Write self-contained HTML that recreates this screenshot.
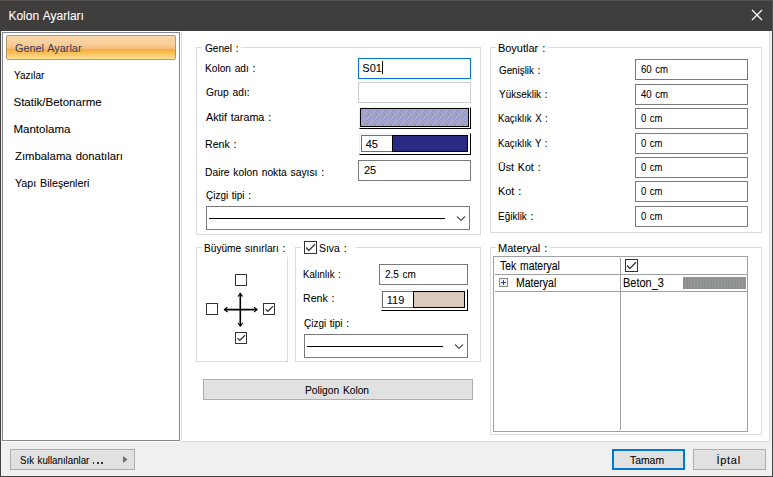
<!DOCTYPE html>
<html><head><meta charset="utf-8"><style>
html,body{margin:0;padding:0;}
body{width:773px;height:477px;position:relative;overflow:hidden;background:#f0f0f0;font-family:"Liberation Sans",sans-serif;}
.a{position:absolute;box-sizing:border-box;}
.t{position:absolute;white-space:pre;transform-origin:0 0;font-family:"Liberation Sans",sans-serif;word-spacing:1px;-webkit-text-stroke:0.07px currentColor;}

</style></head><body>
<!-- window frame -->
<div class="a" style="left:0;top:0;width:773px;height:477px;border:1px solid #454341;border-top-color:#555350;"></div>
<!-- title bar -->
<div class="a" style="left:0;top:0;width:773px;height:31px;background:#403e3c;border-top:1px solid #555350;border-right:1px solid #555;"></div>
<svg class="a" style="left:751px;top:9px" width="12" height="12" viewBox="0 0 12 12"><path d="M1 1 L11 11 M11 1 L1 11" stroke="#fff" stroke-width="1.3"/></svg>
<!-- left list panel -->
<div class="a" style="left:1px;top:31px;width:180px;height:411px;background:#fff;"></div>
<div class="a" style="left:2px;top:32px;width:178px;height:409px;border:1px solid #838893;"></div>
<div class="a" style="left:1px;top:31px;width:1px;height:411px;background:#ececec;"></div>
<!-- selected item -->
<div class="a" style="left:6px;top:35px;width:170px;height:25px;border:1px solid #b39a6e;border-radius:2px;background:linear-gradient(to bottom,#f9d8ac 0%,#f8cd98 35%,#f7bf80 54%,#f5ad40 56%,#f8c05a 75%,#fde194 100%);"></div>
<!-- content area -->
<div class="a" style="left:181px;top:31px;width:589px;height:411px;background:#fff;border:1px solid #dcdcdc;border-top:none;"></div>
<!-- group boxes -->
<div class="a" style="left:196px;top:47px;width:285px;height:188px;border:1px solid #dcdcdc;"></div>
<div class="a" style="left:490px;top:47px;width:272px;height:186px;border:1px solid #dcdcdc;"></div>
<div class="a" style="left:196px;top:247px;width:92px;height:115px;border:1px solid #dcdcdc;"></div>
<div class="a" style="left:295px;top:247px;width:186px;height:115px;border:1px solid #dcdcdc;"></div>
<div class="a" style="left:490px;top:247px;width:272px;height:188px;border:1px solid #dcdcdc;"></div>
<!-- label gaps on group borders -->
<div class="a" style="left:202px;top:45px;width:39px;height:4px;background:#fff;"></div>
<div class="a" style="left:496px;top:45px;width:52px;height:4px;background:#fff;"></div>
<div class="a" style="left:202px;top:245px;width:90px;height:4px;background:#fff;"></div>
<div class="a" style="left:286px;top:249px;width:4px;height:8px;background:#fff;"></div>
<div class="a" style="left:301px;top:245px;width:55px;height:4px;background:#fff;"></div>
<div class="a" style="left:496px;top:245px;width:54px;height:4px;background:#fff;"></div>
<!-- Genel inputs -->
<div class="a" style="left:358px;top:58px;width:113px;height:21px;border:1px solid #0078d7;background:#fff;"></div>
<div class="a" style="left:382px;top:61px;width:1px;height:13px;background:#000;"></div>
<div class="a" style="left:358px;top:82px;width:113px;height:21px;border:1px solid #cccccc;background:#fff;"></div>
<!-- hatch -->
<div class="a" style="left:359px;top:107px;width:112px;height:22px;border-top:1px solid #f0f0f0;border-left:1px solid #f0f0f0;border-right:1px solid #000;border-bottom:1px solid #000;"></div>
<svg class="a" style="left:360px;top:108px" width="109" height="19" shape-rendering="crispEdges">
<defs><pattern id="h" x="1" y="1" width="8" height="8" patternUnits="userSpaceOnUse"><rect width="8" height="8" fill="#9d9dca"/><rect x="7" y="0" width="1" height="1" fill="#bcbab4"/><rect x="6" y="1" width="1" height="1" fill="#bcbab4"/><rect x="5" y="2" width="1" height="1" fill="#bcbab4"/><rect x="4" y="3" width="1" height="1" fill="#bcbab4"/><rect x="3" y="4" width="1" height="1" fill="#bcbab4"/><rect x="2" y="5" width="1" height="1" fill="#bcbab4"/><rect x="1" y="6" width="1" height="1" fill="#bcbab4"/><rect x="0" y="7" width="1" height="1" fill="#bcbab4"/><rect x="2" y="2" width="1" height="1" fill="#bcbab4"/><rect x="5" y="5" width="1" height="1" fill="#bcbab4"/><rect x="0" y="3" width="1" height="1" fill="#bcbab4"/><rect x="3" y="0" width="1" height="1" fill="#bcbab4"/><rect x="5" y="2" width="1" height="1" fill="#bcbab4"/><rect x="2" y="5" width="1" height="1" fill="#bcbab4"/></pattern></defs>
<rect x="0" y="0" width="109" height="19" fill="url(#h)"/><rect x="0.5" y="0.5" width="108" height="18" fill="none" stroke="#000" stroke-width="1"/></svg>
<!-- renk -->
<div class="a" style="left:359px;top:133px;width:112px;height:22px;border-top:1px solid #f0f0f0;border-left:1px solid #f0f0f0;border-right:1px solid #000;border-bottom:1px solid #000;"></div>
<div class="a" style="left:361px;top:135px;width:31px;height:17px;border:1px solid #6e6e6e;border-right:none;background:#fff;"></div>
<div class="a" style="left:392px;top:135px;width:76px;height:17px;border:1px solid #000;background:#2b2a82;"></div>
<!-- daire -->
<div class="a" style="left:358px;top:160px;width:113px;height:21px;border:1px solid #7a7a7a;background:#fff;"></div>
<!-- cizgi tipi dropdown -->
<div class="a" style="left:206px;top:206px;width:264px;height:24px;border:1px solid #7a7a7a;background:#fff;"></div>
<div class="a" style="left:209px;top:218px;width:236px;height:1px;background:#000;"></div>
<svg class="a" style="left:456px;top:215px" width="10" height="7"><path d="M1 1.5 L5 5.5 L9 1.5" fill="none" stroke="#505050" stroke-width="1.1"/></svg>
<!-- buyume checkboxes & arrows -->
<div class="a" style="left:235px;top:274px;width:12px;height:12px;border:1px solid #333;background:#fff;"></div>
<div class="a" style="left:206px;top:303px;width:12px;height:12px;border:1px solid #333;background:#fff;"></div>
<div class="a" style="left:263px;top:303px;width:12px;height:12px;border:1px solid #333;background:#fff;"></div>
<div class="a" style="left:235px;top:332px;width:12px;height:12px;border:1px solid #333;background:#fff;"></div>
<svg class="a" style="left:263px;top:303px" width="12" height="12"><path d="M2.5 6.2 L4.8 8.3 L10 3.2" fill="none" stroke="#3a3a3a" stroke-width="1.2"/></svg>
<svg class="a" style="left:235px;top:332px" width="12" height="12"><path d="M2.5 6.2 L4.8 8.3 L10 3.2" fill="none" stroke="#3a3a3a" stroke-width="1.2"/></svg>
<svg class="a" style="left:222px;top:291px" width="38" height="38"><path d="M18.3 2.5 L18.3 35 M2.5 18.6 L35 18.6" fill="none" stroke="#000" stroke-width="1.6"/><path d="M16 5.5 L18.3 2.5 L20.6 5.5 M16 32 L18.3 35 L20.6 32 M5.5 16.3 L2.5 18.6 L5.5 20.9 M32 16.3 L35 18.6 L32 20.9" fill="none" stroke="#000" stroke-width="1.2"/></svg>
<!-- siva checkbox -->
<div class="a" style="left:304px;top:241px;width:13px;height:13px;border:1px solid #333;background:#fff;"></div>
<svg class="a" style="left:304px;top:241px" width="13" height="13"><path d="M2.2 6.5 L4.8 9.5 L11 3.2" fill="none" stroke="#3a3a3a" stroke-width="1.3"/></svg>
<!-- siva inputs -->
<div class="a" style="left:379px;top:264px;width:89px;height:21px;border:1px solid #7a7a7a;background:#fff;"></div>
<div class="a" style="left:381px;top:289px;width:87px;height:22px;border-top:1px solid #f0f0f0;border-left:1px solid #f0f0f0;border-right:1px solid #000;border-bottom:1px solid #000;"></div>
<div class="a" style="left:382px;top:291px;width:32px;height:17px;border:1px solid #6e6e6e;border-right:none;background:#fff;"></div>
<div class="a" style="left:413px;top:291px;width:52px;height:17px;border:1px solid #000;background:#dccbbd;"></div>
<div class="a" style="left:304px;top:334px;width:164px;height:24px;border:1px solid #7a7a7a;background:#fff;"></div>
<div class="a" style="left:307px;top:346px;width:136px;height:1px;background:#000;"></div>
<svg class="a" style="left:454px;top:343px" width="10" height="7"><path d="M1 1.5 L5 5.5 L9 1.5" fill="none" stroke="#505050" stroke-width="1.1"/></svg>
<!-- poligon kolon button -->
<div class="a" style="left:203px;top:379px;width:270px;height:21px;border:1px solid #adadad;background:#e1e1e1;"></div>
<!-- boyutlar inputs -->
<div class="a" style="left:635px;top:59px;width:113px;height:21px;border:1px solid #7a7a7a;background:#fff;"></div>
<div class="a" style="left:635px;top:84px;width:113px;height:21px;border:1px solid #7a7a7a;background:#fff;"></div>
<div class="a" style="left:635px;top:108px;width:113px;height:21px;border:1px solid #7a7a7a;background:#fff;"></div>
<div class="a" style="left:635px;top:133px;width:113px;height:21px;border:1px solid #7a7a7a;background:#fff;"></div>
<div class="a" style="left:635px;top:157px;width:113px;height:21px;border:1px solid #7a7a7a;background:#fff;"></div>
<div class="a" style="left:635px;top:181px;width:113px;height:21px;border:1px solid #7a7a7a;background:#fff;"></div>
<div class="a" style="left:635px;top:206px;width:113px;height:21px;border:1px solid #7a7a7a;background:#fff;"></div>
<!-- materyal grid -->
<div class="a" style="left:493px;top:256px;width:255px;height:176px;border:1px solid #a0a0a8;background:#fff;"></div>
<div class="a" style="left:495px;top:274px;width:252px;height:1px;background:#a0a0a0;"></div>
<div class="a" style="left:495px;top:291px;width:252px;height:1px;background:#a0a0a0;"></div>
<div class="a" style="left:620px;top:258px;width:1px;height:172px;background:#a0a0a0;"></div>
<div class="a" style="left:625px;top:259px;width:13px;height:13px;border:1px solid #333;background:#fff;"></div>
<svg class="a" style="left:625px;top:259px" width="13" height="13"><path d="M2.2 6.5 L4.8 9.5 L11 3.2" fill="none" stroke="#3a3a3a" stroke-width="1.3"/></svg>
<div class="a" style="left:499px;top:278px;width:9px;height:9px;border:1px solid #8a8a8a;background:#f4f4f4;"></div>
<svg class="a" style="left:499px;top:278px" width="9" height="9"><path d="M2 4.5 L7 4.5 M4.5 2 L4.5 7" stroke="#2040a0" stroke-width="1"/></svg>
<div class="a" style="left:683px;top:277px;width:63px;height:12px;background:repeating-linear-gradient(to right,#8e908f 0,#8e908f 2px,#979998 2px,#979998 3px);"></div>
<!-- bottom buttons -->
<div class="a" style="left:10px;top:449px;width:125px;height:21px;border:1px solid #adadad;background:#e1e1e1;"></div>
<svg class="a" style="left:122px;top:455px" width="7" height="10"><path d="M1 1 L5.5 4.5 L1 8 Z" fill="#707070"/></svg>
<div class="a" style="left:612px;top:449px;width:73px;height:21px;border:2px solid #0078d7;background:#e1e1e1;"></div>
<div class="a" style="left:693px;top:449px;width:73px;height:21px;border:1px solid #adadad;background:#e1e1e1;"></div>
<div class="a" style="left:92.7px;top:462px;width:1.7px;height:1.7px;background:#333;"></div>
<div class="a" style="left:97.1px;top:462px;width:1.7px;height:1.7px;background:#333;"></div>
<div class="a" style="left:101.4px;top:462px;width:1.7px;height:1.7px;background:#333;"></div>

<div class="t" style="left:8.4px;top:10.0px;font-size:12px;line-height:12px;color:#fff;">Kolon Ayarları</div>
<div class="t" style="left:15.0px;top:43.0px;font-size:11.5px;line-height:11.5px;color:#3e3f58;transform:scaleX(0.944);">Genel Ayarlar</div>
<div class="t" style="left:14.2px;top:70.0px;font-size:11.5px;line-height:11.5px;color:#000;transform:scaleX(0.871);">Yazılar</div>
<div class="t" style="left:13.5px;top:97.0px;font-size:11.5px;line-height:11.5px;color:#000;">Statik/Betonarme</div>
<div class="t" style="left:13.5px;top:124.0px;font-size:11.5px;line-height:11.5px;color:#000;">Mantolama</div>
<div class="t" style="left:14.5px;top:151.0px;font-size:11.5px;line-height:11.5px;color:#000;transform:scaleX(0.984);">Zımbalama donatıları</div>
<div class="t" style="left:14.5px;top:178.0px;font-size:11.5px;line-height:11.5px;color:#000;transform:scaleX(0.929);">Yapı Bileşenleri</div>
<div class="t" style="left:204.7px;top:43.0px;font-size:11px;line-height:11px;color:#000;transform:scaleX(0.919);">Genel :</div>
<div class="t" style="left:204.9px;top:63.0px;font-size:11px;line-height:11px;color:#000;transform:scaleX(0.923);">Kolon adı :</div>
<div class="t" style="left:206.1px;top:87.0px;font-size:11px;line-height:11px;color:#000;transform:scaleX(0.930);">Grup adı:</div>
<div class="t" style="left:206.1px;top:112.0px;font-size:11px;line-height:11px;color:#000;transform:scaleX(0.977);">Aktif tarama :</div>
<div class="t" style="left:204.9px;top:139.0px;font-size:11px;line-height:11px;color:#000;transform:scaleX(0.961);">Renk :</div>
<div class="t" style="left:205.0px;top:167.0px;font-size:11px;line-height:11px;color:#000;transform:scaleX(0.934);">Daire kolon nokta sayısı :</div>
<div class="t" style="left:206.1px;top:190.0px;font-size:11px;line-height:11px;color:#000;transform:scaleX(0.906);">Çizgi tipi :</div>
<div class="t" style="left:362.3px;top:63.0px;font-size:11px;line-height:11px;color:#000;">S01</div>
<div class="t" style="left:365.7px;top:139.0px;font-size:11px;line-height:11px;color:#000;">45</div>
<div class="t" style="left:363.9px;top:165.0px;font-size:11px;line-height:11px;color:#000;">25</div>
<div class="t" style="left:203.9px;top:243.0px;font-size:11px;line-height:11px;color:#000;transform:scaleX(0.922);">Büyüme sınırları :</div>
<div class="t" style="left:319.1px;top:243.0px;font-size:11px;line-height:11px;color:#000;transform:scaleX(0.948);">Sıva :</div>
<div class="t" style="left:303.0px;top:269.0px;font-size:11px;line-height:11px;color:#000;transform:scaleX(0.874);">Kalınlık :</div>
<div class="t" style="left:302.6px;top:293.0px;font-size:11px;line-height:11px;color:#000;transform:scaleX(0.961);">Renk :</div>
<div class="t" style="left:303.9px;top:318.0px;font-size:11px;line-height:11px;color:#000;transform:scaleX(0.906);">Çizgi tipi :</div>
<div class="t" style="left:385.0px;top:269.0px;font-size:11px;line-height:11px;color:#000;transform:scaleX(0.906);">2.5 cm</div>
<div class="t" style="left:386.8px;top:295.0px;font-size:11px;line-height:11px;color:#000;">119</div>
<div class="t" style="left:304.8px;top:385.0px;font-size:11px;line-height:11px;color:#000;transform:scaleX(0.930);">Poligon Kolon</div>
<div class="t" style="left:497.9px;top:43.0px;font-size:11px;line-height:11px;color:#000;">Boyutlar :</div>
<div class="t" style="left:498.9px;top:65.0px;font-size:11px;line-height:11px;color:#000;transform:scaleX(0.893);">Genişlik :</div>
<div class="t" style="left:498.9px;top:89.0px;font-size:11px;line-height:11px;color:#000;transform:scaleX(0.906);">Yükseklik :</div>
<div class="t" style="left:498.0px;top:113.0px;font-size:11px;line-height:11px;color:#000;transform:scaleX(0.873);">Kaçıklık X :</div>
<div class="t" style="left:498.0px;top:138.0px;font-size:11px;line-height:11px;color:#000;transform:scaleX(0.873);">Kaçıklık Y :</div>
<div class="t" style="left:497.9px;top:162.0px;font-size:11px;line-height:11px;color:#000;transform:scaleX(0.964);">Üst Kot :</div>
<div class="t" style="left:497.9px;top:186.0px;font-size:11px;line-height:11px;color:#000;transform:scaleX(0.986);">Kot :</div>
<div class="t" style="left:498.0px;top:211.0px;font-size:11px;line-height:11px;color:#000;transform:scaleX(0.908);">Eğiklik :</div>
<div class="t" style="left:640.7px;top:64.0px;font-size:11px;line-height:11px;color:#000;transform:scaleX(0.871);">60 cm</div>
<div class="t" style="left:640.7px;top:89.0px;font-size:11px;line-height:11px;color:#000;transform:scaleX(0.871);">40 cm</div>
<div class="t" style="left:640.7px;top:113.0px;font-size:11px;line-height:11px;color:#000;transform:scaleX(0.864);">0 cm</div>
<div class="t" style="left:640.7px;top:138.0px;font-size:11px;line-height:11px;color:#000;transform:scaleX(0.864);">0 cm</div>
<div class="t" style="left:640.7px;top:162.0px;font-size:11px;line-height:11px;color:#000;transform:scaleX(0.864);">0 cm</div>
<div class="t" style="left:640.7px;top:186.0px;font-size:11px;line-height:11px;color:#000;transform:scaleX(0.864);">0 cm</div>
<div class="t" style="left:640.7px;top:211.0px;font-size:11px;line-height:11px;color:#000;transform:scaleX(0.864);">0 cm</div>
<div class="t" style="left:498.1px;top:243.0px;font-size:11px;line-height:11px;color:#000;">Materyal :</div>
<div class="t" style="left:500.0px;top:260.0px;font-size:12px;line-height:12px;color:#000;transform:scaleX(0.868);">Tek materyal</div>
<div class="t" style="left:515.6px;top:277.0px;font-size:12px;line-height:12px;color:#000;transform:scaleX(0.875);">Materyal</div>
<div class="t" style="left:622.9px;top:277.0px;font-size:12px;line-height:12px;color:#000;transform:scaleX(0.916);">Beton_3</div>
<div class="t" style="left:19.6px;top:455.0px;font-size:11px;line-height:11px;color:#000;transform:scaleX(0.881);">Sık kullanılanlar</div>
<div class="t" style="left:630.0px;top:455.0px;font-size:11px;line-height:11px;color:#000;transform:scaleX(0.944);">Tamam</div>
<div class="t" style="left:716.4px;top:455.0px;font-size:11px;line-height:11px;color:#000;letter-spacing:0.75px;">İptal</div>
</body></html>
